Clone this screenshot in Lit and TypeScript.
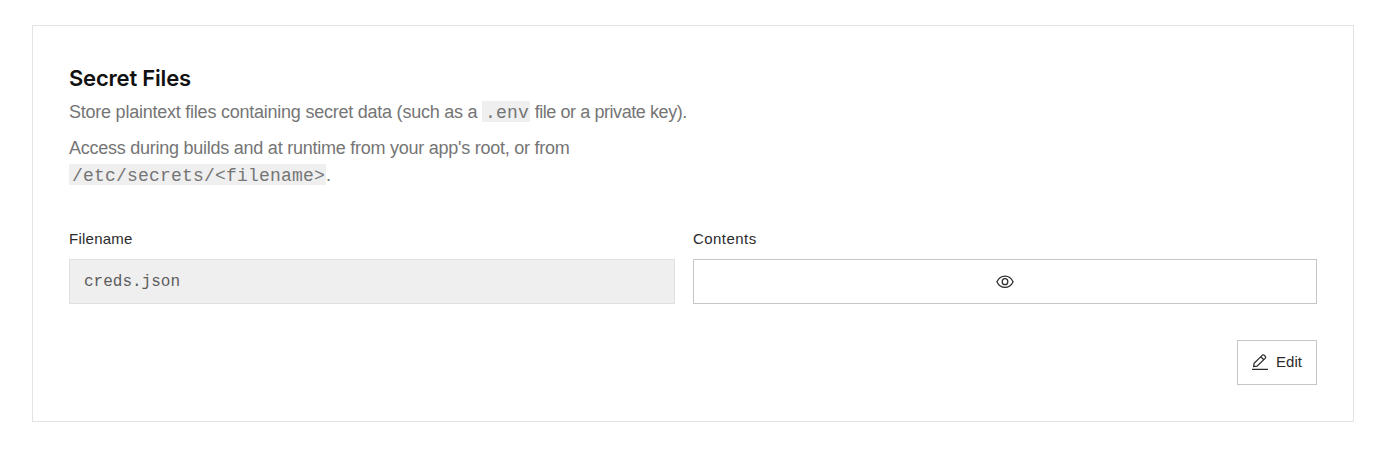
import { LitElement, html, css } from "lit";
import { customElement } from "lit/decorators.js";

@customElement("app-root")
export class AppRoot extends LitElement {
  static styles = css`
    :host { display: block; padding: 25px 21px 29px 32px; background: #fff; font-family: "Liberation Sans", Arial, sans-serif; color: #2b2b2b; }
    * { box-sizing: border-box; }
    .card { height: 397px; border: 1px solid #e3e3e3; padding: 36px; display: flex; flex-direction: column; }
    h2 { margin: 0; font: 600 22px/32px Inter, sans-serif; letter-spacing: -0.2px; color: #111; }
    p { margin: 5px 0 0; font-size: 18px; line-height: 27px; letter-spacing: -0.25px; color: #757575; width: 640px; }
    p + p { margin-top: 9px; }
    .lead { letter-spacing: -0.235px; }
    .tail { letter-spacing: -0.43px; }
    code { display: inline-block; height: 21px; font-family: "Liberation Mono", monospace; font-size: 18px; letter-spacing: 0.2px; background: #efefef; padding: 0 1px 0 3px; line-height: 24px; }
    .fields { display: grid; grid-template-columns: 606px 624px; gap: 18px; margin-top: 38px; }
    .label { display: block; font-size: 15px; line-height: 24px; margin-bottom: 8px; letter-spacing: 0.25px; }
    .label.wide { letter-spacing: 0.45px; }
    .input { height: 45px; border: 1px solid #e0e0e0; background: #efefef; padding: 1px 14px 0; display: flex; align-items: center; font: 16px "Liberation Mono", monospace; color: #5c5c5c; }
    button { border: 1px solid #c6c6c6; border-radius: 0; background: #fff; padding: 0; height: 45px; display: flex; align-items: center; justify-content: center; color: #2b2b2b; font: 15px "Liberation Sans", Arial, sans-serif; }
    .reveal { width: 100%; }
    .edit { width: 80px; align-self: flex-end; margin-top: 36px; padding: 0 1px 2px 0; gap: 7px; }
    svg { width: 18px; height: 18px; display: block; fill: none; stroke: currentColor; stroke-width: 1.25; }
  `;

  render() {
    return html`
      <section class="card">
        <h2>Secret Files</h2>
        <p><span class="lead">Store plaintext files containing secret data (such as a </span><code>.env</code><span class="tail"> file or a private key).</span></p>
        <p>Access during builds and at runtime from your app's root, or from<br /><code>/etc/secrets/&lt;filename&gt;</code>.</p>
        <div class="fields">
          <div><span class="label">Filename</span><div class="input">creds.json</div></div>
          <div>
            <span class="label wide">Contents</span>
            <button class="reveal" aria-label="Show contents">
              <svg viewBox="0 0 18 18"><path d="M.9 8.7C2.7 4.9 5.5 3 9 3S15.3 4.9 17.1 8.7C15.3 12.5 12.5 14.4 9 14.4S2.7 12.5 .9 8.7Z" /><ellipse cx="9" cy="8.7" rx="2.8" ry="3" /></svg>
            </button>
          </div>
        </div>
        <button class="edit">
          <svg viewBox="0 0 18 18"><path d="M1 16.4H17M2.6 13.5 3.1 10.4 11.4 2.1Q12.2 1.5 13 2.1L14.4 3.5Q15 4.3 14.4 5.1L6 13.1ZM9.8 3.7 12.8 6.7" /></svg>
          <span>Edit</span>
        </button>
      </section>
    `;
  }
}
